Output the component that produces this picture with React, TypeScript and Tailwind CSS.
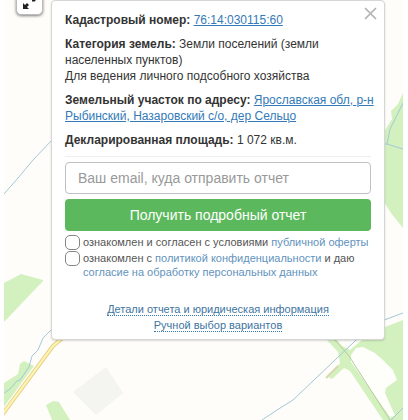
import { useState } from "react";

const LINK = "text-[#337ab7] underline";
const SMALL_LINK = "text-[#5f93bd]";
const DOTTED = "border-b border-dotted border-[#337ab7] text-[11px] leading-3 text-[#40749f]";
const CHECKBOX =
  "h-[15px] w-[15px] shrink-0 appearance-none rounded-[5px] border border-[#858585] bg-white checked:bg-[#337ab7]";

function MapCanvas() {
  return (
    <svg
      className="absolute inset-0 h-full w-full"
      viewBox="0 0 399 420"
      preserveAspectRatio="none"
      aria-hidden="true"
    >
      {/* woods */}
      <g fill="#d3f1bf">
        <path d="M0 283L17 274L39 280L39 281L0 322Z" />
        <path d="M0 383L14 374L16 364L20 361L30 366L16 385L0 407Z" />
        <path d="M42 405L49 401L55 402L66 420H48Z" />
        <path d="M399 93L394 104L387 111L388 119L380 132V202L387 213L399 228Z" />
        <path d="M399 320L371 331L358 340L346 350L338 346L333 340H323L334 352L336 363L324 377L328 379L340 368L346 371L379 420H399Z" />
      </g>
      <path d="M347 362L347 355L352 348L359 347L371 353L380 361L389 370L393 380L382 388L381 393L389 411L391 416L386 417Z" fill="#fefefb" />
      <path d="M331 340L345 356L386 420" stroke="#b9c99c" fill="none" />
      <path d="M322 378L334 366" stroke="#d6d8b1" strokeWidth="2" fill="none" />
      {/* built-up block */}
      <path d="M69 392L102 367L119 393L92 415Z" fill="#f4f4f1" />
      {/* road */}
      <path d="M-2 415L49 346L62 335" stroke="#e5d287" strokeWidth="4" fill="none" />
      <path d="M-2 415L49 346L62 335" stroke="#fff4b4" strokeWidth="2" fill="none" />
      {/* streams */}
      <g fill="none" stroke="#a3c8d6">
        <path d="M0 194L14 178L29 160L48 140" />
        <path d="M0 393L6 389L13 381L16 380L25 367L28 356L34 350L39 338L48 329" />
        <path d="M399 103L386 129L383 144L399 149M383 144H378" />
        <path d="M399 313L372 323L351 341L289 400L273 410L258 420" />
        <path d="M399 408L387 420" />
      </g>
    </svg>
  );
}

export default function App() {
  const [email, setEmail] = useState("");

  return (
    <main className="min-h-screen bg-white pr-[5px] pl-1 font-['Liberation_Sans',Arial,sans-serif] text-xs leading-4 text-[#333]">
      <div className="relative min-h-screen overflow-hidden bg-[#fefdf9]">
        <MapCanvas />
        <button
          type="button"
          aria-label="Развернуть карту"
          className="absolute -top-3 left-3 h-[27px] w-[27px] rounded-[5px] border border-[#bbb] bg-white shadow-[0_1px_3px_rgba(0,0,0,0.5)]"
        >
          <svg className="absolute top-1 left-1" width="18" height="18" viewBox="0 0 18 18" aria-hidden="true">
            <path d="M2 16V10L4 12L6 10L8 12L6 14L8 16Z" fill="#222" />
            <path d="M11 8L14 5V8Z" fill="#222" stroke="#222" />
          </svg>
        </button>

        <section className="relative mr-[18px] ml-[47px] rounded-sm border border-[#d6d6d6] bg-white px-[13px] pt-[11px] pb-1.5 shadow-[0_1px_2px_rgba(0,0,0,0.15)]">
          <button type="button" aria-label="Закрыть" className="absolute top-[5px] right-1.5 p-px">
            <svg width="13" height="13" viewBox="0 0 13 13" stroke="#b0b0b0" strokeWidth="1.6" aria-hidden="true">
              <path d="M1 1L12 12M12 1L1 12" />
            </svg>
          </button>

          <div className="-mr-2 space-y-2">
            <p>
              <b>Кадастровый номер:</b> <a href="#number" className={LINK}>76:14:030115:60</a>
            </p>
            <p>
              <b>Категория земель:</b> Земли поселений (земли
              <br />
              населенных пунктов)
              <br />
              Для ведения личного подсобного хозяйства
            </p>
            <p>
              <b>Земельный участок по адресу:</b>{" "}
              <a href="#address" className={LINK}>
                Ярославская обл, <span className="whitespace-nowrap">р-н</span> Рыбинский, Назаровский с/о, дер Сельцо
              </a>
            </p>
            <p>
              <b>Декларированная площадь:</b> 1 072 кв.м.
            </p>
          </div>

          <hr className="mt-2 border-[#eee]" />

          <form className="mt-[5px]" onSubmit={(e) => e.preventDefault()}>
            <input
              type="email"
              aria-label="Ваш email"
              placeholder="Ваш email, куда отправить отчет"
              value={email}
              onChange={(e) => setEmail(e.target.value)}
              className="block h-8 w-full rounded border border-[#bfc1c5] bg-white px-3 text-sm text-[#555] placeholder:text-[#999]"
            />
            <button
              type="submit"
              className="mt-[5px] block h-8 w-full rounded bg-[#5cb85c] text-sm text-white"
            >
              Получить подробный отчет
            </button>
            <div className="mt-1 text-[11px] leading-[14px] text-[#555]">
              <div className="flex gap-[3px]">
                <input id="offer" type="checkbox" className={CHECKBOX} />
                <label htmlFor="offer">
                  ознакомлен и согласен с условиями <a href="#offer-text" className={SMALL_LINK}>публичной оферты</a>
                </label>
              </div>
              <div className="mt-px flex gap-[3px]">
                <input id="privacy" type="checkbox" className={CHECKBOX} />
                <label htmlFor="privacy">
                  ознакомлен с <a href="#privacy-text" className={SMALL_LINK}>политикой конфиденциальности</a> и даю{" "}
                  <a href="#consent" className={SMALL_LINK}>согласие на обработку персональных данных</a>
                </label>
              </div>
            </div>
          </form>

          <div className="mt-[22px] text-center">
            <a href="#details" className={DOTTED}>Детали отчета и юридическая информация</a>
            <br />
            <a href="#variants" className={DOTTED}>Ручной выбор вариантов</a>
          </div>
        </section>
      </div>
    </main>
  );
}
